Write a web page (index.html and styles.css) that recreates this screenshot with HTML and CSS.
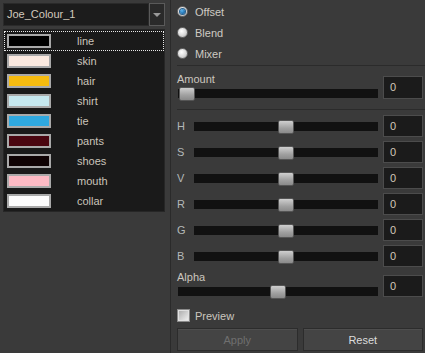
FILE: index.html
```html
<!DOCTYPE html>
<html lang="en">
<head>
  <meta charset="UTF-8">
  <title>Colour Adjust</title>
  <link rel="stylesheet" href="styles.css">
</head>
<body>
<div class="window">
  <div class="palette">
    <div class="combo">
      <span class="combo-text">Joe_Colour_1</span>
      <span class="combo-btn"><i></i></span>
    </div>
    <ul class="swatches">
      <li class="focus"><span class="chip" style="background:#000000"></span><span class="name">line</span></li>
      <li><span class="chip" style="background:#fbe9df"></span><span class="name">skin</span></li>
      <li><span class="chip" style="background:#f6bb0f"></span><span class="name">hair</span></li>
      <li><span class="chip" style="background:#c6e8ef"></span><span class="name">shirt</span></li>
      <li><span class="chip" style="background:#2fa8df"></span><span class="name">tie</span></li>
      <li><span class="chip" style="background:#4a0610"></span><span class="name">pants</span></li>
      <li><span class="chip" style="background:#0f0304"></span><span class="name">shoes</span></li>
      <li><span class="chip" style="background:#fdbac4"></span><span class="name">mouth</span></li>
      <li><span class="chip" style="background:#fcfcfc"></span><span class="name">collar</span></li>
    </ul>
  </div>

  <div class="controls">
    <div class="modes">
      <label class="radio-row"><span class="radio checked"></span>Offset</label>
      <label class="radio-row"><span class="radio"></span>Blend</label>
      <label class="radio-row"><span class="radio"></span>Mixer</label>
    </div>
    <div class="sep"></div>

    <div class="block amount">
      <div class="col">
        <div class="caption">Amount</div>
        <div class="slider"><span class="track"></span><span class="handle" style="left:1px"></span></div>
      </div>
      <div class="field">0</div>
    </div>
    <div class="sep"></div>

    <div class="channels">
      <div class="channel"><span class="letter">H</span><div class="slider"><span class="track"></span><span class="handle mid"></span></div><div class="field">0</div></div>
      <div class="channel"><span class="letter">S</span><div class="slider"><span class="track"></span><span class="handle mid"></span></div><div class="field">0</div></div>
      <div class="channel"><span class="letter">V</span><div class="slider"><span class="track"></span><span class="handle mid"></span></div><div class="field">0</div></div>
      <div class="channel"><span class="letter">R</span><div class="slider"><span class="track"></span><span class="handle mid"></span></div><div class="field">0</div></div>
      <div class="channel"><span class="letter">G</span><div class="slider"><span class="track"></span><span class="handle mid"></span></div><div class="field">0</div></div>
      <div class="channel"><span class="letter">B</span><div class="slider"><span class="track"></span><span class="handle mid"></span></div><div class="field">0</div></div>
    </div>

    <div class="block alpha">
      <div class="col">
        <div class="caption">Alpha</div>
        <div class="slider"><span class="track"></span><span class="handle mid"></span></div>
      </div>
      <div class="field">0</div>
    </div>

    <label class="check-row"><span class="check"></span>Preview</label>

    <div class="buttons">
      <button class="btn" disabled>Apply</button>
      <button class="btn">Reset</button>
    </div>
  </div>
</div>
</body>
</html>
```

FILE: styles.css
```css
* {
  margin: 0;
  padding: 0;
  box-sizing: border-box;
}

li {
  list-style: none;
}

body {
  background-color: #3a3a3a;
  font-family: "Liberation Sans", Arial, sans-serif;
  font-size: 11px;
  color: #c9c6c0;
}

.window {
  display: flex;
  width: 425px;
  height: 353px;
}

/* left: palette list */

.palette {
  width: 170px;
  padding: 3px 5px 0 3px;
}

.combo {
  display: flex;
  height: 23px;
}

.combo-text {
  flex: 1;
  background-color: #1c1c1c;
  border: 1px solid #2a2a2a;
  padding-left: 3px;
  line-height: 21px;
  color: #d2c9bc;
  font-size: 11px;
}

.combo-btn {
  width: 16px;
  background-color: #2a2a2a;
  border: 1px solid #5a5a5a;
  display: flex;
  align-items: center;
  justify-content: center;
}

.combo-btn i {
  width: 0;
  height: 0;
  border-left: 4px solid transparent;
  border-right: 4px solid transparent;
  border-top: 4px solid #9a9a9a;
}

.swatches {
  margin-top: 3px;
  background-color: #1a1a1a;
  border: 1px solid #262626;
  padding: 1px 0 0 0;
  height: 183px;
}

.swatches li {
  display: flex;
  align-items: center;
  height: 20px;
  padding-left: 2px;
  border: 1px solid transparent;
}

.swatches li.focus {
  border: 1px dotted #e8e8e8;
}

.chip {
  width: 44px;
  height: 14px;
  border: 2px solid #a9a9a9;
}

.name {
  margin-left: 26px;
  color: #cbc4ba;
}

/* right: adjustment controls */

.controls {
  flex: 1;
  border-left: 1px solid #2a2a2a;
  padding: 1px 0 0 6px;
  display: flex;
  flex-direction: column;
}

.modes {
  display: flex;
  flex-direction: column;
}

.radio-row {
  display: flex;
  align-items: center;
  height: 21px;
  color: #cfcac3;
}

.radio {
  width: 11px;
  height: 11px;
  border-radius: 50%;
  border: 1px solid #6c6c6c;
  background: radial-gradient(circle at 40% 35%, #ffffff 0%, #d8d8d8 55%, #a8a8a8 100%);
  margin-right: 7px;
  display: flex;
  align-items: center;
  justify-content: center;
}

.radio.checked::after {
  content: "";
  width: 5px;
  height: 5px;
  border-radius: 50%;
  background: radial-gradient(circle at 40% 35%, #5fb6ee 0%, #1466a8 70%, #0b3e6b 100%);
  box-shadow: 0 0 0 1px #2a5f8a;
}

.sep {
  height: 1px;
  background-color: #2b2b2b;
  margin-top: 1px;
}

.block {
  display: flex;
  align-items: flex-end;
  padding-right: 2px;
}

.amount {
  padding-top: 6px;
  padding-bottom: 7px;
}

.col {
  flex: 1;
  display: flex;
  flex-direction: column;
}

.caption {
  height: 14px;
  line-height: 14px;
  color: #cbc6bf;
}

.slider {
  position: relative;
  height: 15px;
  margin-left: 1px;
}

.track {
  display: block;
  position: absolute;
  left: 0;
  right: 0;
  top: 3px;
  height: 9px;
  background-color: #111111;
}

.handle {
  position: absolute;
  top: 1px;
  width: 16px;
  height: 14px;
  border: 1px solid #555555;
  border-radius: 2px;
  background: linear-gradient(#cfcfcf, #a0a0a0 60%, #8a8a8a);
}

.handle.mid {
  left: 50%;
  margin-left: -8px;
}

.field {
  width: 40px;
  height: 23px;
  margin-left: 5px;
  margin-bottom: 2px;
  background-color: #1b1b1b;
  border: 1px solid #4c4c4c;
  padding-left: 6px;
  line-height: 21px;
  color: #d3c7b8;
}

.channels {
  padding-top: 3px;
  display: flex;
  flex-direction: column;
}

.channel {
  display: flex;
  align-items: center;
  height: 26px;
  padding-right: 2px;
}

.letter {
  width: 17px;
  color: #b3b8b8;
}

.channel .slider {
  flex: 1;
  margin-left: 0;
}

.channel .field {
  height: 22px;
  margin-bottom: 0;
  line-height: 20px;
}

.alpha {
  padding-top: 1px;
}

.alpha .field {
  height: 22px;
  line-height: 20px;
}

.check-row {
  display: flex;
  align-items: center;
  height: 19px;
  margin-top: 7px;
  color: #cbc6bf;
}

.check {
  width: 13px;
  height: 13px;
  border: 1px solid #8a8a8a;
  background: linear-gradient(135deg, #a8a8a8, #f4f4f4);
  margin-right: 5px;
  box-shadow: inset 0 0 0 1px #e0e0e0;
}

.buttons {
  display: flex;
  gap: 5px;
  margin-top: 3px;
  padding-right: 2px;
}

.btn {
  flex: 1;
  height: 23px;
  background-color: #444444;
  border: 1px solid #2c2c2c;
  box-shadow: inset 0 1px 0 #4e4e4e;
  font-family: "Liberation Sans", Arial, sans-serif;
  font-size: 11px;
  color: #dcdcdc;
}

.btn:disabled {
  color: #6f6f6f;
}
```
